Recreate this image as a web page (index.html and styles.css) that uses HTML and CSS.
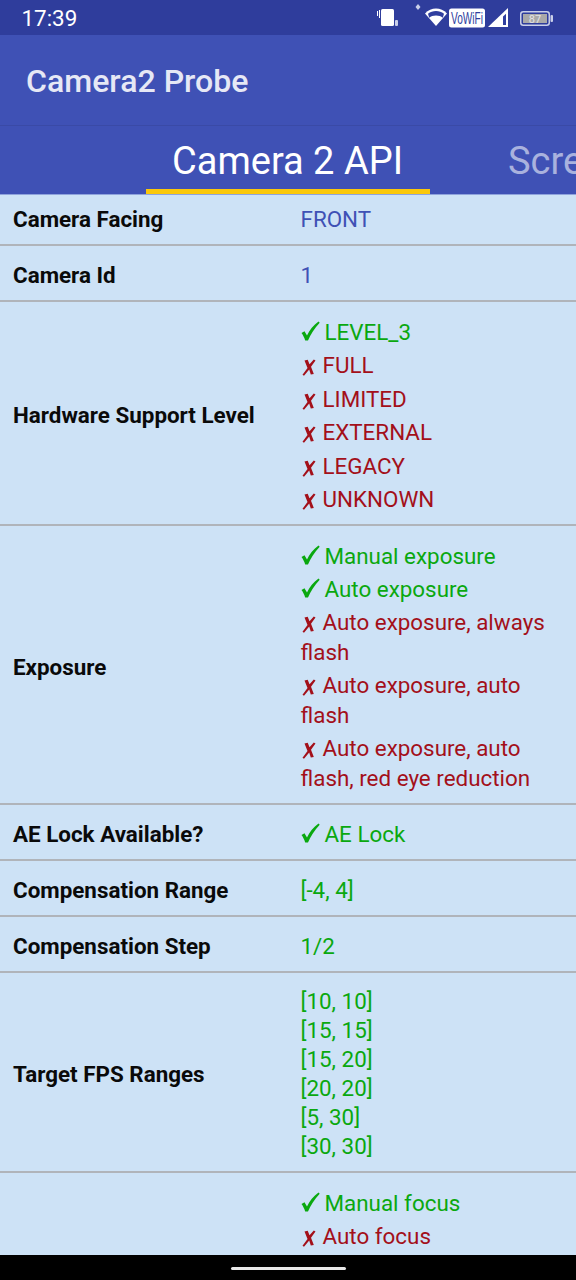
FILE: index.html
```html
<!DOCTYPE html>
<html lang="en">
<head>
  <meta charset="UTF-8">
  <meta name="viewport" content="width=device-width, initial-scale=1.0">
  <title>Camera2 Probe</title>
  <link rel="stylesheet" href="styles.css">
</head>
<body>
  <svg class="defs">
    <symbol id="tick" viewBox="0 0 19 20">
      <path d="M.5 12l3-1.800 2.500 4.200C8.500 9 12.500 4 17.500 .5l1.200 1.300C13.500 7.500 9.500 13.500 7 19.500H4.200C3.300 16.500 2 14 .5 12z"/>
    </symbol>
    <symbol id="cross" viewBox="0 0 14 17">
      <path d="M2.500 1.500l3.200-.8 1.800 4.600L11.800 .5l1.700 1L9 7.800l2.800 7.200-3 .6-1.600-5.200L2 16.800.5 15.800l5-6.800z"/>
    </symbol>
  </svg>

  <div class="app">
    <div class="status-bar">
      <span class="time">17:39</span>
      <div class="status-icons">
        <svg class="ic-vibrate" width="23" height="18" viewBox="0 0 23 18">
          <path d="M1.500 2v5M3.500 1v8" stroke="#fff" stroke-width="1" fill="none"/>
          <rect x="5" y="0" width="13" height="17" rx="1.500" fill="#fff"/>
          <rect x="19" y="11" width="3" height="6" rx="1" fill="#c9cfe9"/>
        </svg>
        <svg class="ic-dot" width="6" height="8" viewBox="0 0 6 8">
          <path d="M3 0l2.500 3L3 6 .5 3z" fill="#c9cfe9"/>
        </svg>
        <svg class="ic-wifi" width="24" height="20" viewBox="0 0 24 20">
          <path d="M12 19L1 6.500C4 3 8 1.500 12 1.500S20 3 23 6.500z" fill="#fff"/>
          <path d="M12 8.500c-2.800 0-5 .8-6.800 2.200L4 6.800C6.300 5 9 4 12 4s5.700 1 8 2.800l-1.200 3.900C17 9.300 14.800 8.500 12 8.500z" fill="#303f9f"/>
        </svg>
        <svg class="ic-vowifi" width="36" height="20" viewBox="0 0 36 20">
          <rect x="0" y="0.500" width="36" height="19" rx="2.500" fill="#fff"/>
          <text x="2" y="16" textLength="32" lengthAdjust="spacingAndGlyphs" class="vowifi-text">VoWiFi</text>
        </svg>
        <svg class="ic-signal" width="20" height="20" viewBox="0 0 20 20">
          <path d="M0 19L20 0v19z" fill="#fff"/>
          <path d="M15 8.500l3-2.800V17h-3z" fill="#303f9f"/>
        </svg>
        <svg class="ic-battery" width="33" height="15" viewBox="0 0 33 15">
          <rect x="0.750" y="0.750" width="28.500" height="13.500" rx="2.500" fill="none" stroke="#c9cfe9" stroke-width="1.500"/>
          <rect x="3" y="3" width="24" height="9" fill="#a9a9a9"/>
          <rect x="30.500" y="4" width="2.500" height="7" rx="1" fill="#c9cfe9"/>
          <text x="15" y="12" class="battery-text">87</text>
        </svg>
      </div>
    </div>

    <div class="toolbar">Camera2 Probe</div>

    <div class="tabs">
      <div class="tab active">Camera 2 API</div>
      <div class="tab">Screen</div>
    </div>

    <div class="list">
      <div class="row">
        <div class="name">Camera Facing</div>
        <div class="value blue">FRONT</div>
      </div>
      <div class="row">
        <div class="name">Camera Id</div>
        <div class="value blue">1</div>
      </div>
      <div class="row tall">
        <div class="name">Hardware Support Level</div>
        <div class="value">
          <div class="yes"><svg class="tick"><use href="#tick"/></svg>LEVEL_3</div>
          <div class="no"><svg class="cross"><use href="#cross"/></svg>FULL</div>
          <div class="no"><svg class="cross"><use href="#cross"/></svg>LIMITED</div>
          <div class="no"><svg class="cross"><use href="#cross"/></svg>EXTERNAL</div>
          <div class="no"><svg class="cross"><use href="#cross"/></svg>LEGACY</div>
          <div class="no"><svg class="cross"><use href="#cross"/></svg>UNKNOWN</div>
        </div>
      </div>
      <div class="row tall exposure">
        <div class="name">Exposure</div>
        <div class="value">
          <div class="yes"><svg class="tick"><use href="#tick"/></svg>Manual exposure</div>
          <div class="yes"><svg class="tick"><use href="#tick"/></svg>Auto exposure</div>
          <div class="no"><svg class="cross"><use href="#cross"/></svg>Auto exposure, always flash</div>
          <div class="no"><svg class="cross"><use href="#cross"/></svg>Auto exposure, auto flash</div>
          <div class="no"><svg class="cross"><use href="#cross"/></svg>Auto exposure, auto flash, red eye reduction</div>
        </div>
      </div>
      <div class="row">
        <div class="name">AE Lock Available?</div>
        <div class="value">
          <div class="yes"><svg class="tick"><use href="#tick"/></svg>AE Lock</div>
        </div>
      </div>
      <div class="row">
        <div class="name">Compensation Range</div>
        <div class="value green">[-4, 4]</div>
      </div>
      <div class="row">
        <div class="name">Compensation Step</div>
        <div class="value green">1/2</div>
      </div>
      <div class="row fps">
        <div class="name">Target FPS Ranges</div>
        <div class="value green">
          <div class="plain">[10, 10]</div>
          <div class="plain">[15, 15]</div>
          <div class="plain">[15, 20]</div>
          <div class="plain">[20, 20]</div>
          <div class="plain">[5, 30]</div>
          <div class="plain">[30, 30]</div>
        </div>
      </div>
      <div class="row tall">
        <div class="name"></div>
        <div class="value">
          <div class="yes"><svg class="tick"><use href="#tick"/></svg>Manual focus</div>
          <div class="no"><svg class="cross"><use href="#cross"/></svg>Auto focus</div>
        </div>
      </div>
    </div>

    <div class="nav-bar"><div class="home-pill"></div></div>
  </div>
</body>
</html>
```

FILE: styles.css
```css
* {
  margin: 0;
  padding: 0;
  box-sizing: border-box;
}

html, body {
  height: 100%;
  overflow: hidden;
}

body {
  font-family: Roboto, sans-serif;
  background: #cde2f6;
}

.defs {
  display: none;
}

.app {
  display: flex;
  flex-direction: column;
  height: 1280px;
  overflow: hidden;
}

.status-bar {
  height: 35px;
  flex: none;
  display: flex;
  justify-content: space-between;
  background: #2f3d9c;
  color: #fff;
  padding: 0 23px 0 21.500px;
}

.time {
  font-size: 22.400px;
  line-height: 37px;
}

.status-icons {
  display: flex;
  align-items: flex-start;
}

.ic-vibrate { margin-top: 9px; }
.ic-dot { margin: 4px 0 0 16px; }
.ic-wifi { margin: 7px 0 0 3px; }
.ic-vowifi { margin: 8px 0 0 1px; }
.ic-signal { margin: 8px 0 0 3px; }
.ic-battery { margin: 11px 0 0 12px; }

.vowifi-text {
  font-family: "Liberation Sans", sans-serif;
  font-size: 16px;
  fill: #303f9f;
}

.battery-text {
  font-family: Roboto, sans-serif;
  font-size: 11px;
  fill: #e4e4e4;
  text-anchor: middle;
}

.toolbar {
  height: 90px;
  flex: none;
  background: #3f51b5;
  color: #e6e8f5;
  font-size: 32.100px;
  font-weight: 500;
  line-height: 92px;
  padding-left: 26px;
}

.tabs {
  height: 70px;
  flex: none;
  display: flex;
  background: #3f51b5;
  border-top: 1px solid #3a4aa6;
  border-bottom: 1px solid #8fa3dc;
  padding-left: 146px;
  overflow: hidden;
  white-space: nowrap;
}

.tab {
  flex: none;
  font-size: 38px;
  line-height: 70px;
  padding: 0 26px;
  color: #a9b2de;
}

.tab.active {
  width: 284px;
  color: #fff;
  border-bottom: 5px solid #fbc80a;
  margin-right: 52px;
}

.list {
  flex: 1;
  overflow: hidden;
  background: #cde2f6;
}

.row {
  display: flex;
  align-items: center;
  border-bottom: 2px solid #b0b4ba;
  padding: 14px 0 10px 13px;
}

.row:first-child {
  padding-top: 9px;
}

.row:last-child {
  border-bottom: none;
}

.row.tall {
  padding-top: 15px;
}

.row.fps {
  padding: 14.500px 0 9.500px 13px;
}

.name {
  width: 287.500px;
  flex: none;
  font-size: 22.400px;
  font-weight: 700;
  color: #0a0a0a;
}

.value {
  flex: 1;
  padding-right: 24px;
  font-size: 22.400px;
  line-height: 30px;
}

.blue { color: #3f51b5; }
.green { color: #0aa80f; }

.yes, .no {
  margin-bottom: 3.400px;
}

.exposure .yes, .exposure .no {
  margin-bottom: 3px;
}

.yes:last-child, .no:last-child {
  margin-bottom: 0;
}

.yes { color: #0aa80f; }
.no { color: #a3101a; }

.tick {
  width: 19px;
  height: 20px;
  margin-right: 5px;
  fill: #0aa80f;
  vertical-align: -1px;
}

.cross {
  width: 14px;
  height: 17px;
  margin: 0 7px 0 1px;
  fill: #a3101a;
  vertical-align: -3px;
}

.plain {
  line-height: 29px;
}

.nav-bar {
  height: 25px;
  flex: none;
  background: #000;
  display: flex;
  justify-content: center;
  padding-top: 12px;
}

.home-pill {
  width: 115px;
  height: 3px;
  border-radius: 2px;
  background: #e8e8e8;
}
```
